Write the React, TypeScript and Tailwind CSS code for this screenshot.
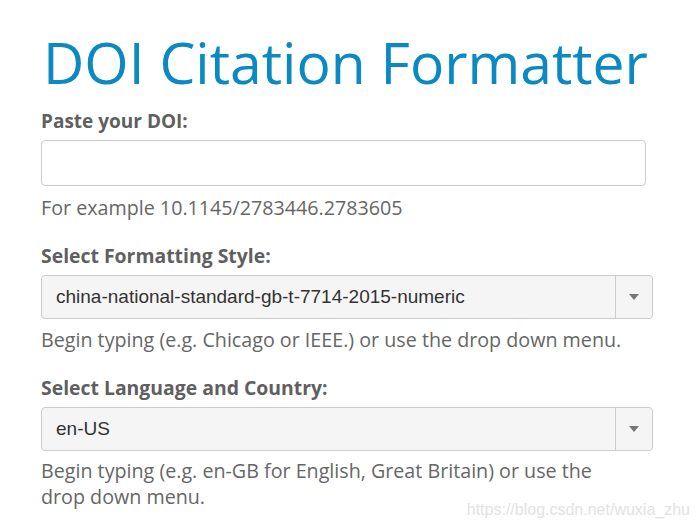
import React from 'react';

function Caret() {
  return (
    <svg width="10" height="6" viewBox="0 0 10 6" className="block">
      <path d="M0 0 L10 0 L5 6 Z" fill="#777" />
    </svg>
  );
}

function SelectBox({ value }: { value: string }) {
  return (
    <div className="flex h-[44px] w-[612px] items-stretch rounded-[4px] border border-[#cccccc] bg-[#f5f5f5]">
      <div
        className="flex flex-1 items-center pl-[14px] text-[19px] text-[#333]"
        style={{ fontFamily: '"Liberation Sans", Arial, sans-serif' }}
      >
        {value}
      </div>
      <div className="flex w-[37px] items-center justify-center border-l border-[#cccccc]">
        <Caret />
      </div>
    </div>
  );
}

export default function App() {
  return (
    <div
      className="relative h-[528px] w-[699px] overflow-hidden bg-white pl-[41px] text-[#666]"
      style={{ fontFamily: '"Open Sans", "Noto Sans", sans-serif' }}
    >
      <h1 className="pt-[26px] pl-[2px] text-[57px] leading-[72px] font-normal text-[#0a89c2]">
        DOI Citation Formatter
      </h1>

      <label className="mt-[11px] block text-[19px] font-bold leading-[24px] text-[#5f5f5f]">
        Paste your DOI:
      </label>
      <div className="mt-[7px] h-[46px] w-[605px] rounded-[4px] border border-[#cccccc] bg-white" />
      <p className="mt-[9px] text-[19.7px] leading-[26px]">For example 10.1145/2783446.2783605</p>

      <label className="mt-[23px] block text-[19.4px] font-bold leading-[24px] text-[#5f5f5f]">
        Select Formatting Style:
      </label>
      <div className="mt-[7px]">
        <SelectBox value="china-national-standard-gb-t-7714-2015-numeric" />
      </div>
      <p className="mt-[8px] text-[19.7px] leading-[26px]">
        Begin typing (e.g. Chicago or IEEE.) or use the drop down menu.
      </p>

      <label className="mt-[23px] block text-[19.4px] font-bold leading-[24px] text-[#5f5f5f]">
        Select Language and Country:
      </label>
      <div className="mt-[7px]">
        <SelectBox value="en-US" />
      </div>
      <p className="mt-[7px] w-[580px] text-[19.7px] leading-[26px]">
        Begin typing (e.g. en-GB for English, Great Britain) or use the drop down menu.
      </p>

      <div
        className="absolute right-[9px] bottom-[6px] text-[16px] text-[#e2e2e2]"
        style={{ fontFamily: '"Liberation Sans", Arial, sans-serif' }}
      >
        https://blog.csdn.net/wuxia_zhu
      </div>
    </div>
  );
}
